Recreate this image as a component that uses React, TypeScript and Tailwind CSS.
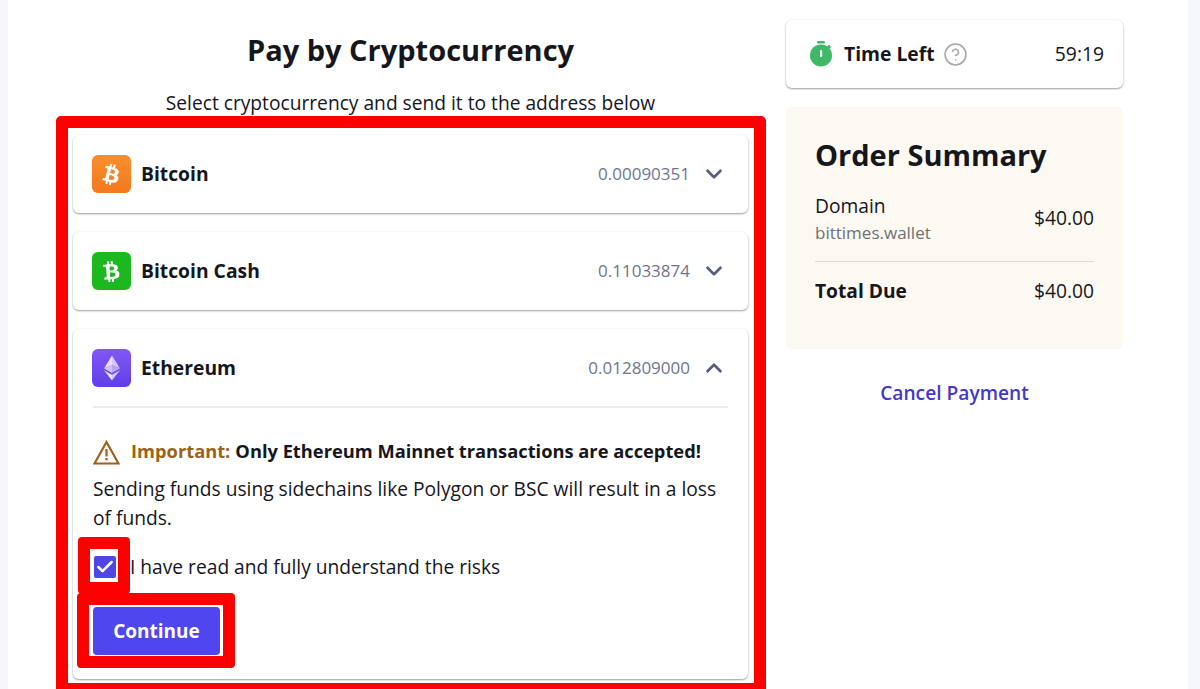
import { ChevronDown, ChevronUp, CircleHelp, Check } from "lucide-react";
import { FaBtc } from "react-icons/fa";
import type { ReactNode } from "react";

const cardCls = "rounded-md bg-white shadow-[0_1px_2px_rgba(0,0,0,0.38),0_0_3px_rgba(0,0,0,0.04)]";

function CoinHeader({ icon, bg, name, amount, open }: { icon: ReactNode; bg: string; name: string; amount: string; open?: boolean }) {
  return (
    <div className="flex items-center h-[78px] px-[20px]">
      <div className={`w-[39px] h-[38px] -ml-[1px] rounded-[6px] flex items-center justify-center text-white ${bg}`}>{icon}</div>
      <div className="ml-[10px] text-[19.3px] font-bold text-[#16161d]">{name}</div>
      <div className="ml-auto mr-[-1px] text-[17px] text-[#6f7590]">{amount}</div>
      <div className="ml-[11px] w-[28px] flex justify-center text-[#555c7c]">
        {open ? <ChevronUp size={26} strokeWidth={2.4} /> : <ChevronDown size={26} strokeWidth={2.4} />}
      </div>
    </div>
  );
}

export default function App() {
  return (
    <div className="relative h-[689px] w-[1200px] overflow-hidden bg-[#f6f6fd] font-['Open_Sans',sans-serif] text-[#16161d]">
      <div className="mx-[8px] h-full w-[1180px] bg-white flex">
        <div className="ml-[65px] w-[675px]">
          <h1 className="mt-[29px] h-[42px] text-center text-[29px] leading-[42px] font-bold">Pay by Cryptocurrency</h1>
          <p className="mt-[19px] h-[26px] text-center text-[19.2px] leading-[26px]">Select cryptocurrency and send it to the address below</p>
          <div className="mt-[19px] flex flex-col gap-[19px]">
            <div className={cardCls}>
              <CoinHeader bg="bg-gradient-to-b from-[#f98d2b] to-[#f37a1f]" name="Bitcoin" amount="0.00090351" icon={<FaBtc size={21} className="rotate-[14deg]" />} />
            </div>
            <div className={cardCls}>
              <CoinHeader bg="bg-[#1cb81f]" name="Bitcoin Cash" amount="0.11033874" icon={<FaBtc size={21} className="rotate-[-4deg]" />} />
            </div>
            <div className={`${cardCls} h-[350px]`}>
              <CoinHeader
                bg="bg-gradient-to-b from-[#8457f5] to-[#5f3fe8]"
                name="Ethereum"
                amount="0.012809000"
                open
                icon={
                  <svg width="16" height="26" viewBox="0 0 18 28" className="-mt-[1px]">
                    <polygon points="9,0 0,14.5 9,10.5" fill="#e8e0fe" />
                    <polygon points="9,0 18,14.5 9,10.5" fill="#d3c6fb" />
                    <polygon points="9,10.5 0,14.5 9,19.5" fill="#cfc2fb" />
                    <polygon points="9,10.5 18,14.5 9,19.5" fill="#b7a5f8" />
                    <polygon points="0,16.5 9,28 9,21.5" fill="#e8e0fe" />
                    <polygon points="18,16.5 9,28 9,21.5" fill="#d3c6fb" />
                  </svg>
                }
              />
              <div className="mx-[20px] -mt-[1px] border-t-2 border-[#ececee]" />
              <div className="px-[20px]">
                <div className="mt-[29px] flex items-center h-[28px] text-[18.3px] font-bold">
                  <svg width="27" height="25" viewBox="0 0 27 25" className="shrink-0 mt-[2px]">
                    <path d="M13.5 2 L25.5 23.5 H1.5 Z" fill="none" stroke="#9c6218" strokeWidth="2.2" strokeLinejoin="miter" />
                    <rect x="12.4" y="9" width="2.2" height="7.5" fill="#9c6218" />
                    <rect x="12.4" y="18" width="2.2" height="2.4" fill="#9c6218" />
                  </svg>
                  <span className="ml-[11px] text-[#9c6218]">Important:</span>
                  <span className="ml-[5px]">Only Ethereum Mainnet transactions are accepted!</span>
                </div>
                <p className="mt-[9px] text-[19.2px] leading-[29px]">Sending funds using sidechains like Polygon or BSC will result in a loss of funds.</p>
                <div className="mt-[12px] flex items-center h-[46px]">
                  <div className="w-[22px] h-[22px] ml-[1px] rounded-[2px] bg-[#4f46e5] flex items-center justify-center text-white">
                    <Check size={20} strokeWidth={3} />
                  </div>
                  <span className="ml-[14px] text-[19.2px]">I have read and fully understand the risks</span>
                </div>
                <button className="mt-[17px] block w-[127px] h-[48px] rounded-[4px] bg-[#4f46f0] text-white text-[19px] font-bold">Continue</button>
              </div>
            </div>
          </div>
        </div>
        <div className="ml-[38px] w-[337px]">
          <div className={`${cardCls} mt-[20px] h-[68px] flex items-center pl-[23px] pr-[19px]`}>
            <svg width="24" height="26" viewBox="0 0 24 26" className="shrink-0">
              <rect x="8" y="0" width="8" height="2.4" rx="1" fill="#3fb868" />
              <rect x="18.4" y="4.2" width="3.2" height="3" rx="1" fill="#3fb868" transform="rotate(45 20 5.7)" />
              <circle cx="12" cy="14.4" r="11" fill="#3fb868" />
              <rect x="11" y="9" width="2.2" height="7" rx="1" fill="#ffffff" />
            </svg>
            <span className="ml-[11px] text-[19.3px] font-bold">Time Left</span>
            <CircleHelp size={25} strokeWidth={1.5} className="ml-[8px] text-[#a9a9a9]" />
            <span className="ml-auto text-[19.3px]">59:19</span>
          </div>
          <div className="mt-[19px] h-[242px] rounded-md bg-[#fcf9f3] px-[29px] pt-[27px]">
            <h2 className="text-[29px] leading-[42px] font-bold">Order Summary</h2>
            <div className="mt-[16px] flex items-center justify-between">
              <div>
                <div className="text-[19.2px] leading-[27px]">Domain</div>
                <div className="text-[17px] leading-[27px] text-[#6f6f76]">bittimes.wallet</div>
              </div>
              <div className="text-[19.2px] mb-[2px]">$40.00</div>
            </div>
            <div className="mt-[15px] border-t border-[#dcdad6]" />
            <div className="mt-[15px] flex items-center justify-between text-[19.2px] leading-[28px]">
              <span className="font-bold">Total Due</span>
              <span>$40.00</span>
            </div>
          </div>
          <div className="mt-[30px] text-center text-[19.2px] leading-[28px] font-semibold text-[#4338ca]">Cancel Payment</div>
        </div>
      </div>
      <div className="pointer-events-none absolute left-[56px] top-[116px] w-[710px] h-[579px] rounded-[5px] border-[12px] border-[#ff0000]" />
      <div className="pointer-events-none absolute left-[78px] top-[537px] w-[52px] h-[57px] rounded-[4px] border-[12px] border-[#ff0000]" />
      <div className="pointer-events-none absolute left-[77px] top-[593px] w-[158px] h-[75px] rounded-[4px] border-[12px] border-[#ff0000]" />
    </div>
  );
}
